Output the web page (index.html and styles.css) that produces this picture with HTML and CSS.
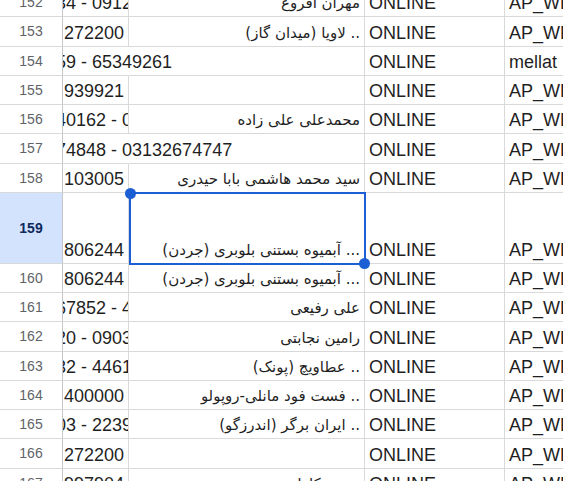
FILE: index.html
```html
<!DOCTYPE html>
<html lang="fa">
<head>
<meta charset="utf-8">
<title>Sheet</title>
<link rel="stylesheet" href="styles.css">
</head>
<body>
<div class="sheet">
  <div class="row">
    <div class="hdr">152</div>
    <div class="cell a str"><span class="lead">34 - 09123456</span></div>
    <div class="cell b" dir="rtl">مهران افروغ</div>
    <div class="cell c">ONLINE</div>
    <div class="cell d">AP_WEB</div>
  </div>
  <div class="row">
    <div class="hdr">153</div>
    <div class="cell a num">272200</div>
    <div class="cell b" dir="rtl">.. لاویا (میدان گاز)</div>
    <div class="cell c">ONLINE</div>
    <div class="cell d">AP_WEB</div>
  </div>
  <div class="row">
    <div class="hdr">154</div>
    <div class="cell a str ov"><span class="lead">59 - 65349261</span></div>
    <div class="cell b" dir="rtl"></div>
    <div class="cell c">ONLINE</div>
    <div class="cell d">mellat</div>
  </div>
  <div class="row">
    <div class="hdr">155</div>
    <div class="cell a num">939921</div>
    <div class="cell b" dir="rtl"></div>
    <div class="cell c">ONLINE</div>
    <div class="cell d">AP_WEB</div>
  </div>
  <div class="row">
    <div class="hdr">156</div>
    <div class="cell a str"><span class="lead">40162 - 09131234567</span></div>
    <div class="cell b" dir="rtl">محمدعلی علی زاده</div>
    <div class="cell c">ONLINE</div>
    <div class="cell d">AP_WEB</div>
  </div>
  <div class="row">
    <div class="hdr">157</div>
    <div class="cell a str ov"><span class="lead">74848 - 03132674747</span></div>
    <div class="cell b" dir="rtl"></div>
    <div class="cell c">ONLINE</div>
    <div class="cell d">AP_WEB</div>
  </div>
  <div class="row">
    <div class="hdr">158</div>
    <div class="cell a num">103005</div>
    <div class="cell b" dir="rtl">سید محمد هاشمی بابا حیدری</div>
    <div class="cell c">ONLINE</div>
    <div class="cell d">AP_WEB</div>
  </div>
  <div class="row tall">
    <div class="hdr on">159</div>
    <div class="cell a num">806244</div>
    <div class="cell b active" dir="rtl">... آبمیوه بستنی بلوبری (جردن)
      <div class="sel"><i class="knob tl"></i><i class="knob br"></i></div>
    </div>
    <div class="cell c">ONLINE</div>
    <div class="cell d">AP_WEB</div>
  </div>
  <div class="row">
    <div class="hdr">160</div>
    <div class="cell a num">806244</div>
    <div class="cell b" dir="rtl">... آبمیوه بستنی بلوبری (جردن)</div>
    <div class="cell c">ONLINE</div>
    <div class="cell d">AP_WEB</div>
  </div>
  <div class="row">
    <div class="hdr">161</div>
    <div class="cell a str"><span class="lead">67852 - 44556677</span></div>
    <div class="cell b" dir="rtl">علی رفیعی</div>
    <div class="cell c">ONLINE</div>
    <div class="cell d">AP_WEB</div>
  </div>
  <div class="row">
    <div class="hdr">162</div>
    <div class="cell a str"><span class="lead">20 - 09031234567</span></div>
    <div class="cell b" dir="rtl">رامین نجابتی</div>
    <div class="cell c">ONLINE</div>
    <div class="cell d">AP_WEB</div>
  </div>
  <div class="row">
    <div class="hdr">163</div>
    <div class="cell a str"><span class="lead">32 - 44615555</span></div>
    <div class="cell b" dir="rtl">.. عطاویچ (پونک)</div>
    <div class="cell c">ONLINE</div>
    <div class="cell d">AP_WEB</div>
  </div>
  <div class="row">
    <div class="hdr">164</div>
    <div class="cell a num">400000</div>
    <div class="cell b" dir="rtl">.. فست فود مانلی-روپولو</div>
    <div class="cell c">ONLINE</div>
    <div class="cell d">AP_WEB</div>
  </div>
  <div class="row">
    <div class="hdr">165</div>
    <div class="cell a str"><span class="lead">03 - 22391234</span></div>
    <div class="cell b" dir="rtl">.. ایران برگر (اندرزگو)</div>
    <div class="cell c">ONLINE</div>
    <div class="cell d">AP_WEB</div>
  </div>
  <div class="row">
    <div class="hdr">166</div>
    <div class="cell a num">272200</div>
    <div class="cell b" dir="rtl"></div>
    <div class="cell c">ONLINE</div>
    <div class="cell d">AP_WEB</div>
  </div>
  <div class="row">
    <div class="hdr">167</div>
    <div class="cell a num">997904</div>
    <div class="cell b" dir="rtl">مهدی کاظمی</div>
    <div class="cell c">ONLINE</div>
    <div class="cell d">AP_WEB</div>
  </div>
</div>
</body>
</html>
```
FILE: styles.css
```css
html, body {
  margin: 0;
  padding: 0;
  background: #ffffff;
  overflow: hidden;
  width: 563px;
  height: 481px;
}

body {
  font-family: "Liberation Sans", Arial, "DejaVu Sans", sans-serif;
  color: #1f1f1f;
}

.sheet {
  margin-top: -12px;
}

.row {
  display: grid;
  grid-template-columns: 63px 66px 236px 140px 1fr;
  height: 29.25px;
}

.row.tall {
  height: 71px;
}

.hdr {
  position: relative;
  z-index: 1;
  background: #ffffff;
  box-sizing: border-box;
  border-right: 1px solid #c6c6c6;
  border-bottom: 1px solid #d9d9d9;
  display: flex;
  align-items: center;
  justify-content: center;
  font-size: 14px;
  color: #5f6368;
}

.hdr.on {
  background: #d3e3fd;
  color: #0f2a5c;
  font-weight: bold;
}

.cell {
  box-sizing: border-box;
  border-right: 1px solid #d9d9d9;
  border-bottom: 1px solid #d9d9d9;
  padding: 0 4px 2px 4px;
  font-size: 18px;
  line-height: 21px;
  white-space: nowrap;
  display: flex;
  align-items: flex-end;
  min-width: 0;
}

.cell.a {
  overflow: hidden;
}

.cell.num {
  justify-content: flex-end;
}

.cell.str .lead {
  margin-left: -11px;
}

.cell.ov {
  overflow: visible;
  border-right-color: transparent;
}

.cell.b {
  justify-content: flex-start;
  overflow: hidden;
  font-family: "DejaVu Sans", "Liberation Sans", sans-serif;
  font-size: 15px;
  color: #1f1f1f;
}

.cell.b.active {
  position: relative;
  overflow: visible;
}

.cell.d {
  overflow: hidden;
  border-right: none;
}

.sel {
  position: absolute;
  left: 0;
  top: -1px;
  right: -2px;
  bottom: -2px;
  border: 2px solid #1c5fd4;
  z-index: 2;
}

.knob {
  position: absolute;
  width: 11px;
  height: 11px;
  border-radius: 50%;
  background: #1c5fd4;
}

.knob.tl {
  left: -6px;
  top: -6px;
}

.knob.br {
  right: -6px;
  bottom: -6px;
}
```
